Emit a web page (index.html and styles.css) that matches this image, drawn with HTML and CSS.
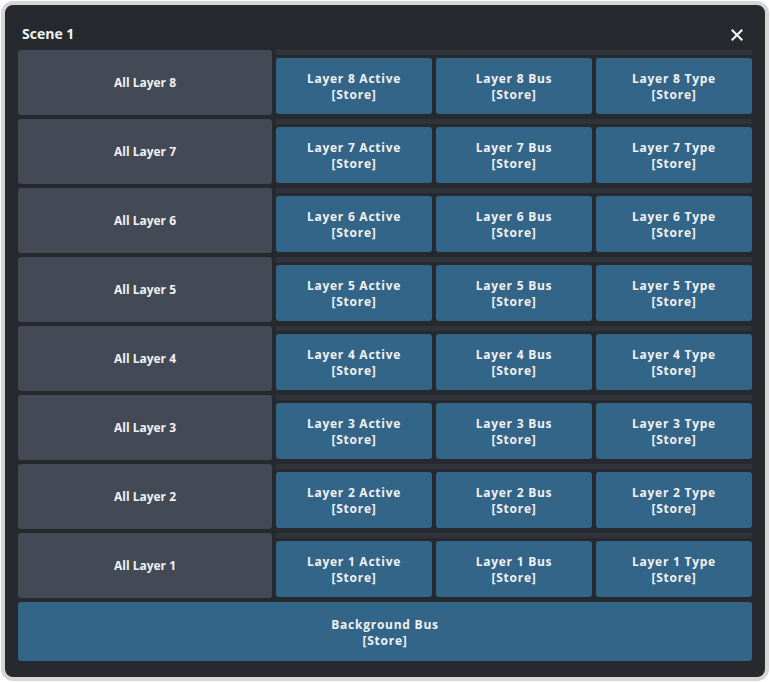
FILE: index.html
```html
<!DOCTYPE html>
<html>

<head>
    <title>Scene 1</title>
    <link rel="stylesheet" href="styles.css">
</head>

<body>
    <div class="dialog">
        <div class="dialog-header">
            <h1>Scene 1</h1>
            <button class="close" title="Close">
                <svg width="12" height="12" viewBox="0 0 12 12">
                    <path d="M1.5 1.5 L10.5 10.5 M10.5 1.5 L1.5 10.5" stroke="#f2f2f2" stroke-width="2.2" stroke-linecap="square" />
                </svg>
            </button>
        </div>
        <div class="layers">
            <div class="layer-row">
                <div class="all-layer">All Layer 8</div>
                <div class="store-group">
                    <div class="store-btn">Layer 8 Active<br>[Store]</div>
                    <div class="store-btn">Layer 8 Bus<br>[Store]</div>
                    <div class="store-btn">Layer 8 Type<br>[Store]</div>
                </div>
            </div>
            <div class="layer-row">
                <div class="all-layer">All Layer 7</div>
                <div class="store-group">
                    <div class="store-btn">Layer 7 Active<br>[Store]</div>
                    <div class="store-btn">Layer 7 Bus<br>[Store]</div>
                    <div class="store-btn">Layer 7 Type<br>[Store]</div>
                </div>
            </div>
            <div class="layer-row">
                <div class="all-layer">All Layer 6</div>
                <div class="store-group">
                    <div class="store-btn">Layer 6 Active<br>[Store]</div>
                    <div class="store-btn">Layer 6 Bus<br>[Store]</div>
                    <div class="store-btn">Layer 6 Type<br>[Store]</div>
                </div>
            </div>
            <div class="layer-row">
                <div class="all-layer">All Layer 5</div>
                <div class="store-group">
                    <div class="store-btn">Layer 5 Active<br>[Store]</div>
                    <div class="store-btn">Layer 5 Bus<br>[Store]</div>
                    <div class="store-btn">Layer 5 Type<br>[Store]</div>
                </div>
            </div>
            <div class="layer-row">
                <div class="all-layer">All Layer 4</div>
                <div class="store-group">
                    <div class="store-btn">Layer 4 Active<br>[Store]</div>
                    <div class="store-btn">Layer 4 Bus<br>[Store]</div>
                    <div class="store-btn">Layer 4 Type<br>[Store]</div>
                </div>
            </div>
            <div class="layer-row">
                <div class="all-layer">All Layer 3</div>
                <div class="store-group">
                    <div class="store-btn">Layer 3 Active<br>[Store]</div>
                    <div class="store-btn">Layer 3 Bus<br>[Store]</div>
                    <div class="store-btn">Layer 3 Type<br>[Store]</div>
                </div>
            </div>
            <div class="layer-row">
                <div class="all-layer">All Layer 2</div>
                <div class="store-group">
                    <div class="store-btn">Layer 2 Active<br>[Store]</div>
                    <div class="store-btn">Layer 2 Bus<br>[Store]</div>
                    <div class="store-btn">Layer 2 Type<br>[Store]</div>
                </div>
            </div>
            <div class="layer-row">
                <div class="all-layer">All Layer 1</div>
                <div class="store-group">
                    <div class="store-btn">Layer 1 Active<br>[Store]</div>
                    <div class="store-btn">Layer 1 Bus<br>[Store]</div>
                    <div class="store-btn">Layer 1 Type<br>[Store]</div>
                </div>
            </div>
            <div class="store-btn background-bus">Background Bus<br>[Store]</div>
        </div>
    </div>
</body>

</html>
```

FILE: styles.css
```css
body {
    margin: 0;
    background-color: #fff;
    font-family: "Open Sans", "Noto Sans", sans-serif;
    color: #f2f2f2;
}

.dialog {
    box-sizing: border-box;
    width: 768px;
    height: 680px;
    margin: 1px;
    border: 4px solid #d6d6d6;
    border-radius: 12px;
    background-color: #262a2f;
    padding: 0 13px 16px 13px;
}

.dialog-header {
    display: flex;
    align-items: flex-start;
    justify-content: space-between;
    height: 45px;
    box-sizing: border-box;
    padding-top: 19px;
}

.dialog-header h1 {
    margin: 0 0 0 4px;
    font-size: 14px;
    line-height: 20px;
    font-weight: 700;
}

.close {
    margin: 5px 9px 0 0;
    padding: 0;
    border: none;
    background: none;
    width: 12px;
    height: 12px;
    cursor: pointer;
}

.close svg {
    display: block;
}

.layers {
    display: flex;
    flex-direction: column;
    gap: 4px;
}

.layer-row {
    display: flex;
    gap: 4px;
    height: 65px;
}

.all-layer {
    width: 254px;
    display: flex;
    align-items: center;
    justify-content: center;
    background-color: #434955;
    border-radius: 3px;
    font-size: 12px;
    font-weight: 700;
}

.store-group {
    flex: 1;
    display: flex;
    gap: 4px;
    border-top: 5px solid #30343a;
    padding-top: 3px;
    height: 56px;
}

.store-btn {
    flex: 1;
    display: flex;
    align-items: center;
    justify-content: center;
    text-align: center;
    box-sizing: border-box;
    padding-top: 2px;
    background-color: #336589;
    border-radius: 3px;
    font-size: 12px;
    line-height: 16px;
    font-weight: 700;
    letter-spacing: 0.75px;
}

.background-bus {
    flex: none;
    height: 59px;
}
```
